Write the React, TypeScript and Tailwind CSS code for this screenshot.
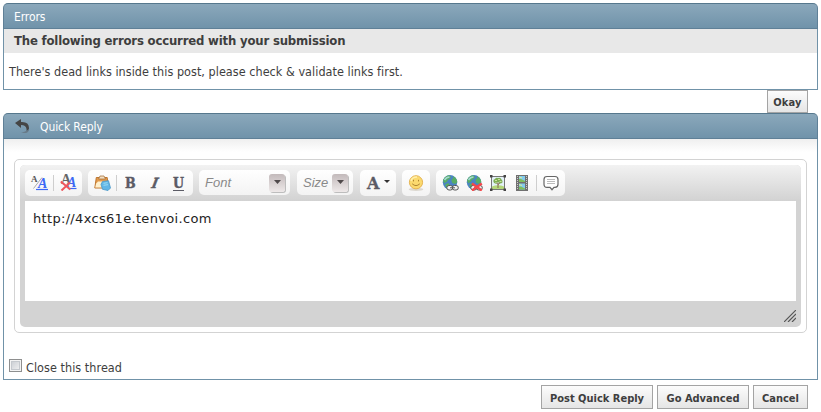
import type { ReactNode } from "react";

const tahoma = "font-['DejaVu_Sans_Condensed','DejaVu_Sans',sans-serif] [font-stretch:condensed]";
const slab = "font-['DejaVu_Serif_Condensed','DejaVu_Serif',serif] [font-stretch:condensed] font-bold";

function PanelHeader({ children }: { children: ReactNode }) {
  return (
    <div className={`flex h-[26px] items-center rounded-t-[5px] border border-[#5f8097] border-t-[#56788d] bg-linear-to-b from-[#8ba8bb] to-[#7093aa] text-[12px] leading-[14px] text-white ${tahoma}`}>
      {children}
    </div>
  );
}

function Button({ children, className }: { children: ReactNode; className: string }) {
  return (
    <button className={`shrink-0 border border-[#a4a4a4] bg-linear-to-b from-[#fcfcfc] to-[#e5e5e5] pt-[3px] text-center text-[11px] leading-[18px] font-bold whitespace-nowrap text-[#3e3e3e] ${tahoma} ${className}`}>
      {children}
    </button>
  );
}

function Group({ children, className }: { children?: ReactNode; className: string }) {
  return <div className={`flex shrink-0 items-center rounded-[5px] bg-linear-to-b from-white to-[#f3f3f3] ${className}`}>{children}</div>;
}

function Separator({ className }: { className: string }) {
  return <span className={`h-4 w-px shrink-0 bg-[#cecece] ${className}`} />;
}

function SwitchMode() {
  return (
    <span className="relative block h-4 w-[18px] shrink-0 font-['Liberation_Serif',serif] font-bold">
      <span className="absolute top-0 left-0 text-[9px] leading-[8px] text-[#555]">A</span>
      <svg className="absolute inset-0" width="18" height="16"><path d="M2.5 13.5L11 2.5" stroke="#aaa" fill="none" /><path d="M5 14.5h12" stroke="#3c68f5" strokeWidth="1.2" /></svg>
      <span className="absolute top-[3px] left-[7px] text-[14px] leading-[12px] text-[#3c68f5] italic">A</span>
    </span>
  );
}

function RemoveFormat() {
  return (
    <span className="relative block h-4 w-[18px] shrink-0 font-['Liberation_Serif',serif] font-bold">
      <span className="absolute top-0 left-[1px] text-[14px] leading-[9px] text-[#666]">A</span>
      <span className="absolute top-[2px] left-[7px] text-[14px] leading-[12px] text-[#3c68f5] italic">A</span>
      <svg className="absolute inset-0" width="18" height="16"><path d="M8 13.5h8.5" stroke="#3c68f5" strokeWidth="1.2" /><path d="M.8 6.5l9.5 8M10 7.5l-8.5 8" stroke="#ee555b" strokeWidth="2" fill="none" /></svg>
    </span>
  );
}

function Paste() {
  return (
    <svg width="17" height="16" viewBox="0 0 17 16" className="shrink-0">
      <path d="M2.3 2.5h10.9l1.3 10.5H.8z" fill="#e39a4c" stroke="#bd7630" />
      <path d="M2.2 8.5L4 6.5h6.5L9 12.5H1.2z" fill="#fff0cd" />
      <path d="M4.5 4L6 1h4l1.5 3z" fill="#f3e0c4" stroke="#a87540" strokeWidth=".8" />
      <path d="M8.5 6.5l6-.8 2 7.3-2.5 2.5-5.5-1.2-1.5-5z" fill="#62b6e6" stroke="#4797c8" strokeWidth=".8" />
      <path d="M9.5 8.3l4-.6M9.5 10.3l4.5-.6" stroke="#9adcf3" />
    </svg>
  );
}

function Globe({ broken = false }: { broken?: boolean }) {
  return (
    <svg width="17" height="16" viewBox="0 0 17 16" className="shrink-0">
      <circle cx="8" cy="7.3" r="7.2" fill="#4b83c4" />
      <path d="M1 5Q3 1 7 .3l2 1.5-1 2-2 1-1 2-3 1.5zM11 1q4 2 4.3 6l-2 2-3-1-1-3 2-2zM3 10l3-2 2 2 1 3-2 1.3Q4 13 3 10z" fill="#58ad65" />
      <path d="M2.5 5q2-3 5-3" stroke="#a4d7d3" strokeWidth="1.5" fill="none" />
      <rect x="4.8" y="10.5" width="6" height="4.5" rx="2.2" fill="#f2f2f2" stroke="#555" />
      <rect x="10.3" y="10.5" width="6" height="4.5" rx="2.2" fill="#f2f2f2" stroke="#555" />
      <path d="M8 12.8h5" stroke="#555" />
      {broken && <path d="M6 8.5l9.8 7M15.8 8.5l-9.8 7" stroke="#f6474a" strokeWidth="2.4" />}
    </svg>
  );
}

function TreePicture() {
  return (
    <svg width="16" height="16" viewBox="0 0 16 16" className="shrink-0">
      <rect x="1.5" y="1.5" width="13" height="13" fill="#e3f1f8" stroke="#777" />
      <path d="M2 11.5q6-2.5 12 0V14H2z" fill="#b4d77a" />
      <path d="M8 7.5V13M5.5 7L8 9.5 11 7" stroke="#85694c" fill="none" />
      <path d="M3.3 6.3q-.2-2 1.7-2.3Q6.2 2 8 3q2.8-.8 3.5 1.5 1.8 1.3.7 3.5l-2 .5L8 7 6 8.7Q3.5 8.5 3.3 6.3z" fill="#7fae55" />
      <path d="M5 5.5h2M8 4.5h2M9.5 6.5h2M5.5 7.5h1" stroke="#c9e29b" />
      <path d="M0 0h2.5v2.5H0zM13.5 0H16v2.5h-2.5zM0 13.5h2.5V16H0zM13.5 13.5H16V16h-2.5z" fill="#444" />
    </svg>
  );
}

function Film() {
  return (
    <svg width="12" height="16" viewBox="0 0 12 16" className="shrink-0">
      <path d="M0 0h12v16H0z" fill="#707070" /><path d="M3 1h6v6H3zM3 8.5h6v6H3z" fill="#83cbec" />
      <path d="M3 4l2 0 4 2v1H3zM3 11.5h2l4 2v1H3z" fill="#7fbd5a" /><path d="M3 2l3 1M3 9.5l3 1" stroke="#e3ee8f" />
      <path d="M1.5 1v14M10.5 1v14" stroke="#ccc" strokeDasharray="1 1" />
    </svg>
  );
}

function Smile() {
  return (
    <svg width="16" height="16" viewBox="0 0 16 16" className="shrink-0">
      <ellipse cx="8" cy="14.4" rx="7.3" ry="1.5" fill="#dcd8d0" />
      <circle cx="8" cy="7.3" r="6.6" fill="#fbd96e" stroke="#e5b452" />
      <path d="M3 6q1-4 6-4" stroke="#fff0ac" strokeWidth="1.5" fill="none" />
      <path d="M5.5 4.8v1.6M10.5 4.8v1.6M4.2 8.8q3.8 3.6 7.6 0" stroke="#b08532" fill="none" />
    </svg>
  );
}

function DropButton() {
  return (
    <span className="flex h-[18px] w-[16px] shrink-0 items-center justify-center rounded-[3px] bg-linear-to-b from-[#c3babb] to-[#eee9e9] shadow-[1px_1px_0_#bdbdbd]">
      <svg className="-mt-px" width="7" height="4"><path d="M0 0h7L3.5 4z" fill="#504a4b" /></svg>
    </span>
  );
}

function Toolbar() {
  return (
    <div className="flex h-9 items-start rounded-t-[5px] bg-linear-to-b from-[#f2f2f2] to-[#d2d2d2] pt-[5px] pl-[5px] text-[#5b5b65]">
      <Group className="h-[26px] w-[57px] pl-[6px]">
        <SwitchMode /><Separator className="ml-[4px]" /><span className="ml-[6px]"><RemoveFormat /></span>
      </Group>
      <Group className="ml-[6px] h-[26px] w-[105px] pl-[6px]">
        <Paste /><Separator className="ml-[5px]" />
        <span className={`ml-[8px] flex h-[16px] text-[14px] leading-[16px] [-webkit-text-stroke:0.4px_#5b5b65] ${slab}`}>
          <span className="w-[25px]">B</span>
          <span className="w-[23px] pl-[2px]"><span className="inline-block -skew-x-12 italic">I</span></span>
          <span className="h-[16px] border-b border-[#5b5b65]">U</span>
        </span>
      </Group>
      <Group className="ml-[6px] h-[25px] w-[91px] justify-between pr-[5px] pl-[6px]">
        <span className="font-['Liberation_Sans',sans-serif] text-[13px] leading-[15px] text-[#898989] italic">Font</span><DropButton />
      </Group>
      <Group className="ml-[7px] h-[25px] w-[56px] justify-between pr-[5px] pl-[6px]">
        <span className="font-['Liberation_Sans',sans-serif] text-[13px] leading-[15px] text-[#898989] italic">Size</span><DropButton />
      </Group>
      <Group className="ml-[7px] h-[26px] w-[36px] pl-[7px]">
        <span className="w-[17px] pt-[2px] font-['DejaVu_Serif',serif] text-[16px] leading-[18px] font-bold [-webkit-text-stroke:0.3px_#5b5b65]">A</span>
        <svg className="-mt-[3px]" width="6" height="3"><path d="M0 0h6L3 3z" fill="#333" /></svg>
      </Group>
      <Group className="ml-[6px] h-[26px] w-[28px] justify-center"><Smile /></Group>
      <Group className="ml-[6px] h-[26px] w-[129px] pl-[6px]">
        <Globe /><span className="ml-[7px]"><Globe broken /></span><span className="ml-[7px]"><TreePicture /></span><span className="ml-[10px]"><Film /></span>
        <Separator className="ml-[8px]" />
        <svg className="ml-[6px]" width="17" height="16" viewBox="0 0 17 16" fill="none"><path d="M4 1.5h8q3 0 3 3v4.8q0 3-3 3h-1L9 14.7l-2-2.4H4q-3 0-3-3V4.5q0-3 3-3z" fill="#fff" stroke="#666" strokeWidth="1.2" /><path d="M4 4.5h8M4 6.5h8M4 8.5h8" stroke="#bbb" /></svg>
      </Group>
    </div>
  );
}

export default function App() {
  return (
    <main className="h-[412px] w-[821px] overflow-hidden bg-white pt-[3px] pl-[3px]">
      <section className="flex h-[87px] w-[815px] flex-col">
        <PanelHeader><h1 className="ml-[10px] pt-[2px] tracking-[-0.1px]">Errors</h1></PanelHeader>
        <div className={`h-[61px] border-x border-b border-[#7092a8] text-[#3e3e3e] ${tahoma}`}>
          <h2 className="h-6 bg-[#e8e8e8] pl-[10px] text-[13px] leading-[24px] font-bold tracking-[-0.18px]">The following errors occurred with your submission</h2>
          <p className="mt-[11px] pl-[5px] text-[12.5px] leading-[16px] tracking-[0.04px]">There's dead links inside this post, please check &amp; validate links first.</p>
        </div>
      </section>
      <div className="flex h-[23px] w-[805px] justify-end"><Button className="h-[23px] w-[41px] tracking-[0.15px]">Okay</Button></div>
      <section className="w-[815px]">
        <PanelHeader>
          <svg className="ml-[11px]" width="15" height="16" viewBox="0 0 15 16"><path d="M0 5l6-4v3q8-.5 8 6 0 3-3 4 1-1 .5-3Q11 7 6 7v3z" fill="#454545" /><path d="M6 15h5q3-1 3-4-2 2-8 4z" fill="#687b89" /></svg>
          <h1 className="ml-[10px] pt-[2px] tracking-[-0.1px]">Quick Reply</h1>
        </PanelHeader>
        <div className="h-[241px] border-x border-b border-[#7092a8] bg-[linear-gradient(to_bottom,#efefef_0px,white_13px)] pt-5 pl-[10px]">
          <div className="h-[174px] w-[793px] rounded-[5px] border border-[#d3d3d3] bg-white p-[5px]">
            <div className="flex h-[162px] flex-col rounded-[5px] bg-[#d3d3d3]">
              <Toolbar />
              <div className="mx-[5px] h-[100px] bg-white pt-[9px] pl-[8px] font-['DejaVu_Sans',sans-serif] text-[13px] leading-[17px] tracking-[0.32px] text-[#222]">http://4xcs61e.tenvoi.com</div>
              <div className="flex h-[26px] justify-end pt-[9px] pr-[5px]">
                <svg width="12" height="12" fill="none"><path d="M0 12L12 0M4 12l8-8M8 12l4-4" stroke="#555" strokeWidth="1.2" /></svg>
              </div>
            </div>
          </div>
          <label className={`mt-[26px] -ml-[5px] flex h-[14px] text-[12.5px] leading-[18px] tracking-[0.05px] text-[#3e3e3e] ${tahoma}`}>
            <span className="mr-[4px] size-[13px] border border-[#8e8f8f] bg-linear-to-br from-[#c5c9cf] to-[#f6f6f6] shadow-[inset_0_0_0_1px_#f4f4f4,inset_0_0_0_2px_#c5c9ce]" />
            Close this thread
          </label>
        </div>
      </section>
      <div className="mt-[5px] flex w-[805px] justify-end gap-1">
        <Button className="h-6 w-[112px]">Post Quick Reply</Button>
        <Button className="h-6 w-[92px]">Go Advanced</Button>
        <Button className="h-6 w-[55px]">Cancel</Button>
      </div>
    </main>
  );
}
